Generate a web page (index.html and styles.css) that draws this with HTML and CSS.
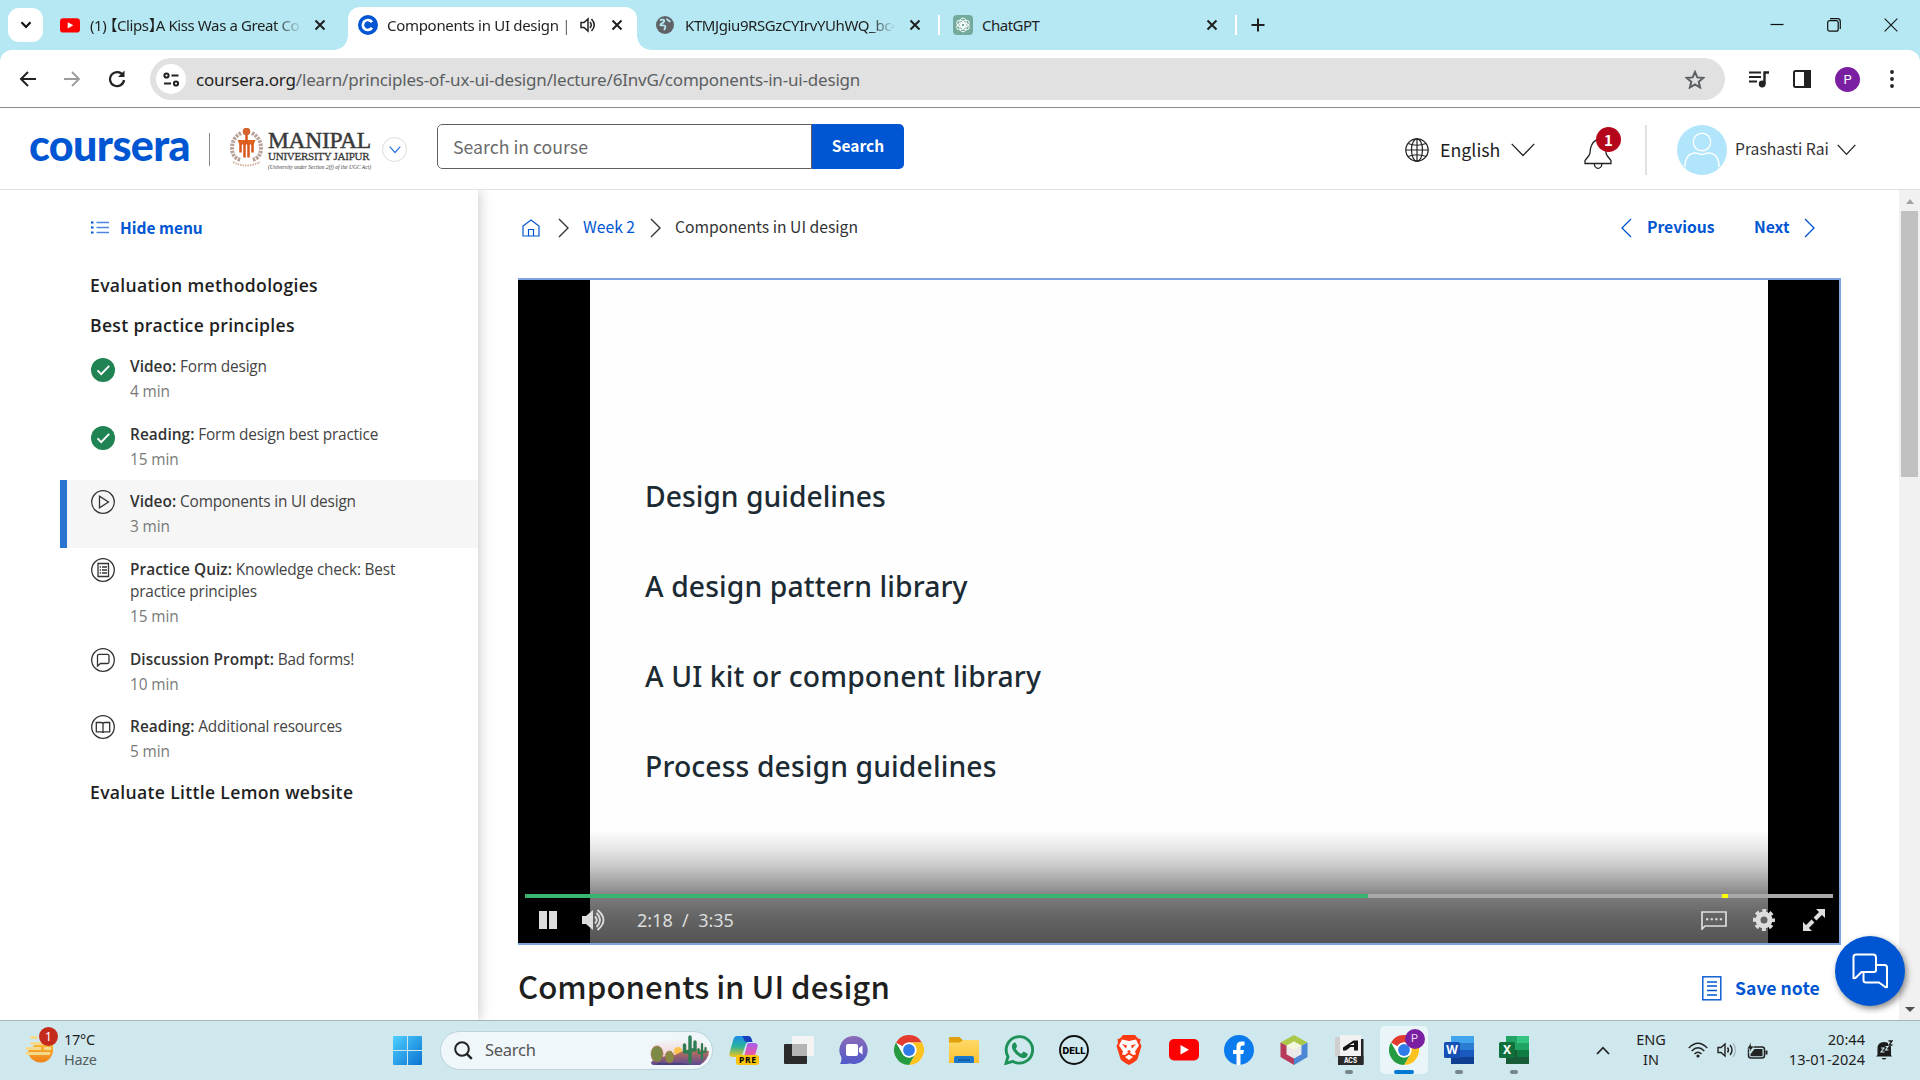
FILE: index.html
```html
<!DOCTYPE html>
<html lang="en">
<head>
<meta charset="utf-8">
<title>Components in UI design | Coursera</title>
<link rel="stylesheet" href="styles.css">
</head>
<body>
<svg class="defs" width="0" height="0">
  <defs>
    <linearGradient id="gWin" x1="0" y1="0" x2="1" y2="1"><stop offset="0" stop-color="#4fd0ff"/><stop offset="1" stop-color="#0a72d2"/></linearGradient>
    <linearGradient id="gSky" x1="0" y1="0" x2="0" y2="1"><stop offset="0" stop-color="#f0f7fa"/><stop offset="1" stop-color="#f7b3b3"/></linearGradient>
    <linearGradient id="gSand" x1="0" y1="0" x2="0" y2="1"><stop offset="0" stop-color="#c9754f"/><stop offset="1" stop-color="#5b4a94"/></linearGradient>
    <linearGradient id="gCopA" x1="0" y1="0" x2="0" y2="1"><stop offset="0" stop-color="#1b8fe8"/><stop offset=".5" stop-color="#29b39a"/><stop offset="1" stop-color="#f3c51c"/></linearGradient>
    <linearGradient id="gCopB" x1="0" y1="0" x2="0" y2="1"><stop offset="0" stop-color="#a45cf2"/><stop offset=".6" stop-color="#e85aa5"/><stop offset="1" stop-color="#f98a4c"/></linearGradient>
    <linearGradient id="gChat" x1="0" y1="0" x2="0" y2="1"><stop offset="0" stop-color="#8b6bb8"/><stop offset="1" stop-color="#5059c9"/></linearGradient>
    <linearGradient id="gFold" x1="0" y1="0" x2="0" y2="1"><stop offset="0" stop-color="#ffd968"/><stop offset="1" stop-color="#fbc02f"/></linearGradient>
    <linearGradient id="gSun" x1="0" y1="0" x2="0" y2="1"><stop offset="0" stop-color="#f9b934"/><stop offset="1" stop-color="#f08218"/></linearGradient>
    <symbol id="chrome" viewBox="0 0 30 30">
      <circle cx="15" cy="15" r="15" fill="#fff"/>
      <path d="M2 7.500A15 15 0 0 1 28 7.500H15a7.500 7.500 0 0 0-6.500 3.750z" fill="#e33b2e"/>
      <path d="M28 7.500A15 15 0 0 1 15 30l6.500-11.250A7.500 7.500 0 0 0 15 7.500z" fill="#fcc31e"/>
      <path d="M15 30A15 15 0 0 1 2 7.500l6.500 11.250a7.500 7.500 0 0 0 13 0z" fill="#249a41"/>
      <circle cx="15" cy="15" r="7.500" fill="#fff"/><circle cx="15" cy="15" r="5.900" fill="#2f7bea"/>
    </symbol>
    <symbol id="youtube" viewBox="0 0 30 22"><rect width="30" height="21.500" rx="5" fill="#f00"/><path d="M11.500 6v9.500l8.500-4.750z" fill="#fff"/></symbol>
    <symbol id="cross" viewBox="0 0 12 12"><path d="M1.500 1.500l9 9m0-9l-9 9" stroke="#1f1f1f" stroke-width="2" fill="none"/></symbol>
    <symbol id="check" viewBox="0 0 24 24"><circle cx="12" cy="12" r="12" fill="#1f8354"/><path d="M6.500 12.300l3.700 3.900 8-8.400" stroke="#fff" stroke-width="1.900" fill="none"/></symbol>
  </defs>
</svg>

<div class="tabstrip">
  <div class="tabsearch"><svg width="12" height="8" viewBox="0 0 12 8"><path d="M1.500 1.200L6 5.900l4.500-4.700" stroke="#111" stroke-width="2.200" fill="none"/></svg></div>
  <div class="tab tab-a">
    <svg class="fav" width="20" height="15"><use href="#youtube"/></svg>
    <span class="tabtext t-a">(1) <i>【</i>Clips<i>】</i>A Kiss Was a Great Co</span>
    <svg class="x" width="12" height="12"><use href="#cross"/></svg>
  </div>
  <div class="tab tab-b">
    <svg class="fav" width="20" height="20" viewBox="0 0 20 20"><circle cx="10" cy="10" r="10" fill="#0056d2"/><path d="M14 7.200a5 5 0 1 0 0 5.600" stroke="#fff" stroke-width="2.700" fill="none"/></svg>
    <span class="tabtext t-b">Components in UI design | C</span>
    <svg class="spk" width="16" height="16" viewBox="0 0 16 16"><path d="M1 5.500h3L8 2v12l-4-3.500H1z" stroke="#222" stroke-width="1.500" fill="none"/><path d="M10 5q2.500 3 0 6M11.500 2q5.500 6 0 12" stroke="#222" stroke-width="1.500" fill="none"/></svg>
    <svg class="x" width="12" height="12"><use href="#cross"/></svg>
  </div>
  <div class="tab tab-c">
    <svg class="fav" width="18" height="18" viewBox="0 0 18 18"><circle cx="9" cy="9" r="9" fill="#5f6368"/><path d="M4 4.500c2-1.500 5-1 4 1S5 7 4.500 8.500 7 9 8.500 9.500s1 2.500-.5 4.500M11 2.500c-.5 2 2.500 1.500 3 3.500" stroke="#b5e8f2" stroke-width="1.800" fill="none"/></svg>
    <span class="tabtext t-c">KTMJgiu9RSGzCYIrvYUhWQ_bc4</span>
    <svg class="x" width="12" height="12"><use href="#cross"/></svg>
  </div>
  <i class="tabsep"></i>
  <div class="tab tab-d">
    <svg class="fav" width="20" height="20" viewBox="0 0 20 20"><rect width="20" height="20" rx="4" fill="#74aa9c"/><g fill="none" stroke="#fff" stroke-width="1"><ellipse cx="10" cy="7.500" rx="3.200" ry="4.300"/><ellipse cx="10" cy="7.500" rx="3.200" ry="4.300" transform="rotate(60 10 10)"/><ellipse cx="10" cy="7.500" rx="3.200" ry="4.300" transform="rotate(120 10 10)"/><ellipse cx="10" cy="7.500" rx="3.200" ry="4.300" transform="rotate(180 10 10)"/><ellipse cx="10" cy="7.500" rx="3.200" ry="4.300" transform="rotate(240 10 10)"/><ellipse cx="10" cy="7.500" rx="3.200" ry="4.300" transform="rotate(300 10 10)"/></g></svg>
    <span class="tabtext t-d">ChatGPT</span>
    <svg class="x" width="12" height="12"><use href="#cross"/></svg>
  </div>
  <i class="tabsep"></i>
  <svg class="plus" width="14" height="14" viewBox="0 0 14 14"><path d="M7 .5v13M.5 7h13" stroke="#1f1f1f" stroke-width="2"/></svg>
  <div class="winctl">
    <svg width="14" height="14" viewBox="0 0 14 14"><path d="M.5 6.500h13" stroke="#111" stroke-width="1.200"/></svg>
    <svg width="14" height="14" viewBox="0 0 14 14"><rect x=".7" y="2.700" width="10.500" height="10.500" rx="2" fill="none" stroke="#111" stroke-width="1.200"/><path d="M3 .7h7.500a2.800 2.800 0 0 1 2.800 2.800V11" fill="none" stroke="#111" stroke-width="1.200"/></svg>
    <svg width="14" height="14" viewBox="0 0 14 14"><path d="M.7.700l12.600 12.600M13.300.700L.7 13.300" stroke="#111" stroke-width="1.100"/></svg>
  </div>
</div>

<div class="toolbar">
  <svg class="nav" width="18" height="16" viewBox="0 0 18 16"><path d="M17 8H2M9 1L2 8l7 7" stroke="#222" stroke-width="2" fill="none"/></svg>
  <svg class="nav" width="18" height="16" viewBox="0 0 18 16"><path d="M1 8h15M9 1l7 7-7 7" stroke="#9b9b9b" stroke-width="1.800" fill="none"/></svg>
  <svg class="nav reload" width="18" height="18" viewBox="0 0 18 18"><path d="M15 5.500A7 7 0 1 0 16 10" stroke="#222" stroke-width="2.200" fill="none"/><path d="M16.500.5v6.500H10z" fill="#222"/></svg>
  <div class="omnibox">
    <span class="site"><svg width="17" height="15" viewBox="0 0 17 15"><g stroke="#222" stroke-width="2" fill="none"><circle cx="3.500" cy="3.500" r="2.100"/><path d="M8.500 3.500h7M1 11.500h7"/><circle cx="13" cy="11.500" r="2.100"/></g></svg></span>
    <span class="url"><b>coursera.org</b>/learn/principles-of-ux-ui-design/lecture/6InvG/components-in-ui-design</span>
    <svg class="star" width="20" height="19" viewBox="0 0 20 19"><path d="M10 2l2.300 5.400 5.900.5-4.500 3.900 1.400 5.700L10 14.400l-5.100 3.100 1.400-5.700L1.800 7.900l5.900-.5z" stroke="#5c5f62" stroke-width="2" fill="none"/></svg>
  </div>
  <svg class="music" width="20" height="17" viewBox="0 0 20 17"><path d="M0 1.500h12M0 6h12M0 10.500h8" stroke="#222" stroke-width="2.200"/><path d="M15.500 13V1.500H20" stroke="#222" stroke-width="2.400" fill="none"/><circle cx="13.200" cy="13" r="3.400" fill="#222"/></svg>
  <svg class="panel" width="18" height="18" viewBox="0 0 18 18"><rect x="1" y="1" width="16" height="16" rx="1.500" stroke="#222" stroke-width="2" fill="none"/><path d="M11 0h7v18h-7z" fill="#222"/></svg>
  <span class="me">P</span>
  <svg class="dots" width="4" height="18" viewBox="0 0 4 18"><g fill="#222"><circle cx="2" cy="2" r="1.900"/><circle cx="2" cy="9" r="1.900"/><circle cx="2" cy="16" r="1.900"/></g></svg>
</div>

<header class="head">
  <div class="brand">coursera</div>
  <i class="rule rule-a"></i>
  <div class="manipal">
    <svg width="33" height="40" viewBox="0 0 33 40"><path d="M11 5Q2 10 2 20t9 12M22 5q9 5 9 15t-9 12" stroke="#b9a29a" stroke-width="4" stroke-dasharray="2.500 1" fill="none"/><path d="M3 34q13 7 27 0" stroke="#d5b3a4" stroke-width="2" stroke-dasharray="1.500 1" fill="none"/><circle cx="16.500" cy="3.500" r="3.800" fill="#d4622c"/><path d="M7.500 12h18l-2 4.500h-14z" fill="#e0601f"/><path d="M10.500 15.500v9M14.500 15.500v14M18.500 15.500v14M22.500 15.500v9M16.500 7v8" stroke="#d8571c" stroke-width="2.500"/></svg>
    <div class="mtext"><span class="m1">MANIPAL</span><span class="m2">UNIVERSITY JAIPUR</span><span class="m3">(University under Section 2(f) of the UGC Act)</span></div>
  </div>
  <span class="drop"><svg width="12" height="8" viewBox="0 0 12 8"><path d="M.7.700L6 6.500 11.300.700" stroke="#2a73e0" stroke-width="1.200" fill="none"/></svg></span>
  <div class="search"><span>Search in course</span><b>Search</b></div>
  <svg class="globe" width="24" height="24" viewBox="0 0 24 24"><g fill="none" stroke="#222" stroke-width="1.200"><circle cx="12" cy="12" r="11.200"/><ellipse cx="12" cy="12" rx="5.500" ry="11.200"/><path d="M.8 12h22.400M12 .8v22.400M3 5.500q9 3.500 18 0M3 18.500q9-3.500 18 0"/></g></svg>
  <span class="lang">English</span>
  <svg class="chev1" width="24" height="14" viewBox="0 0 24 14"><path d="M.7.900L12 12.500 23.300.900" stroke="#222" stroke-width="1.300" fill="none"/></svg>
  <div class="bell"><svg width="28" height="34" viewBox="0 0 28 34"><path d="M1 27.500h26v-3l-4-5c-2-3-.5-6-2.500-10C19 6 16.500 4 14 4S9 6 7.500 9.500c-2 4-.5 7-2.500 10l-4 5zM10.300 27.500a3.800 4.800 0 0 0 7.600 0M14 4V1.500" stroke="#222" stroke-width="1.300" fill="none"/></svg><span>1</span></div>
  <i class="rule rule-b"></i>
  <span class="avatar"><svg width="50" height="50" viewBox="0 0 50 50"><g fill="none" stroke="#fff" stroke-width="1.400"><circle cx="25" cy="17" r="8.700"/><path d="M8 42c0-9 4-14 11-14 2 0 3 1.500 6 1.500s4-1.500 6-1.500c7 0 11 5 11 14"/></g></svg></span>
  <span class="name">Prashasti Rai</span>
  <svg class="chev2" width="19" height="12" viewBox="0 0 19 12"><path d="M.7.900l8.800 9.500L18.300.900" stroke="#222" stroke-width="1.300" fill="none"/></svg>
</header>

<div class="page">
  <aside class="side">
    <div class="hide"><svg width="18" height="13" viewBox="0 0 18 13"><path d="M5.500 1.500H18M5.500 6.500H18M5.500 11.500H18" stroke="#4a86df" stroke-width="1.600"/><path d="M0 1.500h2.500M0 6.500h2.500M0 11.500h2.500" stroke="#0056d2" stroke-width="2.200"/></svg><b>Hide menu</b></div>
    <h3>Evaluation methodologies</h3>
    <h3>Best practice principles</h3>
    <ul>
      <li><svg class="ic low" width="24" height="24"><use href="#check"/></svg><div><p><b>Video:</b> Form design</p><small>4 min</small></div></li>
      <li><svg class="ic low" width="24" height="24"><use href="#check"/></svg><div><p><b>Reading:</b> Form design best practice</p><small>15 min</small></div></li>
      <li class="on"><svg class="ic" width="24" height="24" viewBox="0 0 24 24"><g fill="none" stroke="#333" stroke-width="1.300"><circle cx="12" cy="12" r="11.300"/><path d="M8.500 6.300v11.400l9-5.700z"/></g></svg><div><p><b>Video:</b> Components in UI design</p><small>3 min</small></div></li>
      <li class="tall"><svg class="ic" width="24" height="24" viewBox="0 0 24 24"><g fill="none" stroke="#333" stroke-width="1.300"><circle cx="12" cy="12" r="11.300"/><path d="M7 5.500h10.500v13H7zM11 9h5M11 12h5M11 15h5M8.700 9H10M8.700 12H10M8.700 15H10"/></g></svg><div><p><b>Practice Quiz:</b> Knowledge check: Best<br>practice principles</p><small>15 min</small></div></li>
      <li><svg class="ic" width="24" height="24" viewBox="0 0 24 24"><g fill="none" stroke="#333" stroke-width="1.300"><circle cx="12" cy="12" r="11.300"/><path d="M8 6.300h8.500q1.500 0 1.500 1.500V14q0 1.500-1.500 1.500h-7L6.500 18V7.800Q6.500 6.300 8 6.300z"/></g></svg><div><p><b>Discussion Prompt:</b> Bad forms!</p><small>10 min</small></div></li>
      <li><svg class="ic" width="24" height="24" viewBox="0 0 24 24"><g fill="none" stroke="#333" stroke-width="1.300"><circle cx="12" cy="12" r="11.300"/><path d="M5.300 7.500h5q1.700 0 1.700 1.500 0-1.500 1.700-1.500h5v9.300h-5q-1.700 0-1.700 1.300 0-1.300-1.700-1.300h-5zM12 9v9"/></g></svg><div><p><b>Reading:</b> Additional resources</p><small>5 min</small></div></li>
    </ul>
    <h3 class="last">Evaluate Little Lemon website</h3>
  </aside>

  <main class="main">
    <nav class="crumbs">
      <svg class="home" width="18" height="18" viewBox="0 0 18 18"><path d="M1 17V7l8-6 8 6v10zM6.500 17v-6.500h5V17" stroke="#0056d2" stroke-width="1.200" fill="none"/></svg>
      <svg class="c1" width="11" height="20" viewBox="0 0 11 20"><path d="M1 1l9 9-9 9" stroke="#333" stroke-width="1.400" fill="none"/></svg>
      <span class="week">Week 2</span>
      <svg class="c2" width="11" height="20" viewBox="0 0 11 20"><path d="M1 1l9 9-9 9" stroke="#333" stroke-width="1.400" fill="none"/></svg>
      <span class="here">Components in UI design</span>
      <svg class="c3" width="11" height="20" viewBox="0 0 11 20"><path d="M10 1l-9 9 9 9" stroke="#0056d2" stroke-width="1.300" fill="none"/></svg>
      <b class="prev">Previous</b>
      <b class="next">Next</b>
      <svg class="c4" width="11" height="20" viewBox="0 0 11 20"><path d="M1 1l9 9-9 9" stroke="#0056d2" stroke-width="1.300" fill="none"/></svg>
    </nav>
    <section class="player">
      <div class="slide"><p class="s1">Design guidelines</p><p class="s2">A design pattern library</p><p class="s3">A UI kit or component library</p><p class="s4">Process design guidelines</p></div>
      <div class="controls">
        <div class="track"><i class="done"></i><i class="mark"></i></div>
        <div class="buttons">
          <svg class="pause" width="18" height="18" viewBox="0 0 18 18"><path d="M0 0h8v18H0zM10 0h8v18h-8z" fill="#ddd"/></svg>
          <svg class="vol" width="24" height="22" viewBox="0 0 24 22"><path d="M0 7h4l7-6v20l-7-6H0z" fill="#ddd"/><path d="M13 7.500q3.500 3.500 0 7M14.500 4q7 7 0 14M15.500 1q12 10 0 20" stroke="#ddd" stroke-width="1.800" fill="none"/></svg>
          <span class="time">2:18&nbsp; /&nbsp; 3:35</span>
          <svg class="cc" width="26" height="19" viewBox="0 0 26 19"><path d="M1 1h24v14H4l-3 3z" stroke="#ddd" stroke-width="1.700" fill="none"/><path d="M5 8.200h17" stroke="#ddd" stroke-width="2" stroke-dasharray="2.300 2.300"/></svg>
          <svg class="gear" width="22" height="22" viewBox="0 0 22 22"><circle cx="11" cy="11" r="6" fill="none" stroke="#ddd" stroke-width="5"/><circle cx="11" cy="11" r="9.500" fill="none" stroke="#ddd" stroke-width="3" stroke-dasharray="4 3.460" stroke-dashoffset="2"/></svg>
          <svg class="full" width="22" height="22" viewBox="0 0 22 22"><path d="M13 0h9v9zM0 13v9h9z" fill="#ddd"/><path d="M12 10l6-6M10 12l-6 6" stroke="#ddd" stroke-width="4"/></svg>
        </div>
      </div>
    </section>
    <div class="titlebar">
      <h1>Components in UI design</h1>
      <svg width="20" height="25" viewBox="0 0 20 25"><rect x=".8" y=".8" width="18" height="23" fill="none" stroke="#0056d2" stroke-width="1.400"/><path d="M5 6h10M5 10h10M5 14.500h10M5 19h10" stroke="#0056d2" stroke-width="1.300"/></svg>
      <b>Save note</b>
    </div>
    <button class="chat"><svg width="36" height="36" viewBox="0 0 36 36"><path d="M4 1.500h17q3 0 3 3V17q0 2-2 2H9.500L4 24.500q-1 1-2.500.5V4q0-2.500 2.500-2.500z" stroke="#fff" stroke-width="2" fill="none"/><path d="M24 12h8.500q2.500 0 2.500 2.500V34q-1.500.5-2.500-.5L27 29.500H14q-2.500 0-2.500-2.500v-8" stroke="#fff" stroke-width="2" fill="none"/></svg></button>
  </main>
  <div class="scroll"><i class="up"></i><i class="thumb"></i><i class="down"></i></div>
</div>

<footer class="task">
  <div class="weather">
    <svg width="30" height="32" viewBox="0 0 30 32"><path d="M3 17a12.500 12.500 0 0 0 25-2V9H12z" fill="url(#gSun)"/><path d="M6.500 3.500h5M6.500 9.500h14M2 14.500h13M2 19.500h22M20 14.500h5" stroke="#f5d98d" stroke-width="2.800" stroke-linecap="round"/></svg>
    <span class="wb">1</span>
    <div><p>17°C</p><p class="haze">Haze</p></div>
  </div>
  <svg class="start" width="29" height="29" viewBox="0 0 29 29"><path d="M0 1q0-1 1-1h13v14H0zM15 0h13q1 0 1 1v13H15zM0 15h14v14H1q-1 0-1-1zM15 15h14v13q0 1-1 1H15z" fill="url(#gWin)"/></svg>
  <div class="tsearch">
    <svg width="19" height="19" viewBox="0 0 19 19"><circle cx="8" cy="8" r="6.800" stroke="#222" stroke-width="2" fill="none"/><path d="M12.800 12.800l5 5" stroke="#222" stroke-width="2.400"/></svg>
    <span>Search</span>
    <svg width="60" height="32" viewBox="0 0 60 32"><path d="M2 31V12Q18 3 38 4t20 14l-4 11z" fill="url(#gSky)" opacity=".75"/><circle cx="28" cy="17" r="4" fill="#ffc24d"/><path d="M1 28q10-6 24-7l10-5 10-1 14 2q0 8-9 14H4q-3 0-3-3z" fill="url(#gSand)"/><path d="M8 29h24l9 2H6z" fill="#49417f"/><ellipse cx="7" cy="20" rx="6" ry="8" fill="#7d8a45" stroke="#b85b4b" stroke-dasharray="1 1"/><ellipse cx="19.500" cy="23" rx="4.500" ry="6" fill="#8a8946" stroke="#b85b4b" stroke-dasharray="1 1"/><g fill="none" stroke="#2f7d55" stroke-linecap="round" stroke-linejoin="round"><path d="M40 28V3M40 18h-5.500v-7M40 16h5V8" stroke-width="3.400"/><path d="M52 25V10M52 19h-3.500v-4M52 18h3.500v-4" stroke-width="2.200"/></g></svg>
  </div>
  <div class="apps">
    <span><svg width="30" height="30" viewBox="0 0 30 30"><path d="M8 1h11q2.500 0 3.500 3l1 3h-3.500q-2.500 0-3.500 3l-3 9q-1 3-4 3H4q-4.500 0-3.500-4L4.500 4q1-3 3.500-3z" fill="url(#gCopA)"/><path d="M13 1h6q2.500 0 3.500 3l1 3h-6q-2 0-2.500-3z" fill="#173fc0"/><path d="M20 8h5q4.500 0 3.500 4l-3 10q-1 4-5 4h-7q-3 0-2-3h1q2 0 3-3l2-8q.5-4 2.500-4z" fill="url(#gCopB)"/><rect x="7" y="20" width="23" height="10" rx="2.500" fill="#fbc50e"/><text x="18.500" y="28" font-size="8.500" font-weight="700" text-anchor="middle" font-family="Noto Sans" textLength="17">PRE</text></svg></span>
    <span><svg width="30" height="30" viewBox="0 0 30 30"><rect y="9" width="23" height="20" rx="1" fill="#2b2b2b"/><rect x="8" y="1" width="22" height="20" rx="1" fill="#f4f4f4"/><path d="M8 9h15v12H8z" fill="#b4b4b4"/></svg></span>
    <span><svg width="30" height="30" viewBox="0 0 30 30"><path d="M15 1a14 14 0 1 1-4 27.500Q8 29 1 29q2-3 1.300-7A14 14 0 0 1 15 1z" fill="url(#gChat)"/><rect x="7" y="9" width="12" height="12" rx="2" fill="#fff"/><path d="M20 13l3.500-2.500v9L20 17z" fill="#fff"/></svg></span>
    <span><svg width="30" height="30"><use href="#chrome"/></svg></span>
    <span><svg width="30" height="28" viewBox="0 0 30 28"><path d="M0 2q0-1 1-1h9q1 0 2 1.500L13.500 4H29q1 0 1 1v7H0z" fill="#dfa10b"/><path d="M0 6.500h11l3-2.500h15q1 0 1 1v22H0z" fill="url(#gFold)"/><path d="M5 27v-5q0-2 2-2h16q2 0 2 2v5z" fill="#1a78cc"/><path d="M9 24h12" stroke="#0b4f94" stroke-width="1.200"/></svg></span>
    <span><svg width="30" height="30" viewBox="0 0 30 30"><path d="M2 28.300l2-6.800a13.200 13.200 0 1 1 5 4.900z" fill="none" stroke="#1d9157" stroke-width="2.900"/><path d="M10 7.500q1.500-.5 2 1l1 2.500q.3 1-1.300 2.500 2 4 5.500 5.500l1.800-2q.5-.5 1.500 0l2.500 1.200q1 .5.500 2-1 3-4.500 3Q14 22.500 9.500 16q-3.500-5.500.5-8.500z" fill="#1d9157"/></svg></span>
    <span><svg width="30" height="30" viewBox="0 0 30 30"><circle cx="15" cy="15" r="14" fill="none" stroke="#111" stroke-width="1.900"/><text x="15" y="18.500" font-size="9.500" font-weight="800" text-anchor="middle" font-family="Inter" textLength="23" lengthAdjust="spacingAndGlyphs">DELL</text></svg></span>
    <span><svg width="26" height="30" viewBox="0 0 26 30"><path d="M7 0h12l3 3.500 2.500.5-.5 4 1.500 3-4 13q-1 2-8.500 6Q5.500 26 4.500 24L.5 11 2 8 1.500 4 4 3.500z" fill="#f93a13"/><path d="M6 4.500l7 1.500 7-1.500 3 6-4 6 1 3-3 .5-4-3-4 3-3-.5 1-3-4-6zM9 22l4-2.500 4 2.500-4 3z" fill="#fff"/><path d="M6 9l5 1.500-1 3zM20 9l-5 1.500 1 3zM13 8v7l-2 1.500 2 1.500 2-1.500-2-1.500" fill="#f93a13"/></svg></span>
    <span><svg width="30" height="22"><use href="#youtube"/></svg></span>
    <span><svg width="30" height="30" viewBox="0 0 30 30"><circle cx="15" cy="15" r="15" fill="#0b7bee"/><path d="M12.500 30V19H9v-4h3.500v-3.500q0-5 5-5h3v4h-2q-2 0-2 2V15H20l-.8 4h-2.700v11z" fill="#fff"/></svg></span>
    <span><svg width="28" height="30" viewBox="0 0 28 30"><path d="M14 0l13.500 7.500L21 11l-7-4-7 4L.5 7.500z" fill="#abc84b"/><path d="M.5 7.500L7 11v8l7 4v7L.5 22z" fill="#b83a5b"/><path d="M27.500 7.500L21 11v8l-7 4v7l13.500-8z" fill="#4b87d4"/><path d="M14 6.500l7.500 4.300v8.500L14 23.500l-7.500-4.200v-8.500z" fill="#e9e9ea"/><path d="M14 6.500l7.500 4.300L14 15l-7.500-4.200z" fill="#f4f7de"/></svg></span>
    <span class="run"><svg width="29" height="30" viewBox="0 0 29 30"><path d="M5 4h23.500v25H5z" fill="#222"/><path d="M0 2h20v20H0z" fill="#cfcfcf"/><path d="M5 0h21v21H5z" fill="#f2f2f2"/><path d="M8 15.500v-3L18.500 5.500H23v10h-4v-3.500h-3.500l-4.500 3.500zM14.500 10H19V8z" fill="#151515" fill-rule="evenodd"/><path d="M3 21h25.500v9H3z" fill="#2a2a2a"/><text x="15.500" y="28" font-size="7" font-weight="700" fill="#fff" text-anchor="middle" font-family="Inter" textLength="13" lengthAdjust="spacingAndGlyphs">ACS</text></svg></span>
    <span class="active"><svg width="30" height="30"><use href="#chrome"/></svg><i class="pbadge">P</i></span>
    <span class="run"><svg width="30" height="28" viewBox="0 0 30 28"><rect x="7" width="23" height="28" rx="1.500" fill="#2368c4"/><path d="M7 0h23v7H7z" fill="#41a5ee"/><path d="M7 7h23v7H7z" fill="#2b7cd3"/><path d="M7 14h23v7H7z" fill="#185abd"/><path d="M7 21h23v7H7z" fill="#103f91"/><rect y="6" width="16" height="16" rx="1.500" fill="#1650b5"/><text x="8" y="18.200" font-size="12" font-weight="700" fill="#fff" text-anchor="middle" font-family="Noto Sans">W</text></svg></span>
    <span class="run"><svg width="30" height="28" viewBox="0 0 30 28"><path d="M7 0h23v28H7z" fill="#21a366"/><path d="M18 0h12v7H18z" fill="#33c481"/><path d="M18 7h12v7H18z" fill="#21a366"/><path d="M7 14h11v14H7z" fill="#185c37"/><path d="M18 14h12v7H18z" fill="#107c41"/><path d="M18 21h12v7H18z" fill="#185c37"/><rect y="6" width="16" height="16" rx="1.500" fill="#0f703b"/><text x="8" y="18.200" font-size="12" font-weight="700" fill="#fff" text-anchor="middle" font-family="Noto Sans">X</text></svg></span>
  </div>
  <div class="tray">
    <svg class="caret" width="14" height="9" viewBox="0 0 14 9"><path d="M1 8l6-6.300L13 8" stroke="#222" stroke-width="1.800" fill="none"/></svg>
    <div class="eng">ENG<br>IN</div>
    <svg class="wifi" width="20" height="16" viewBox="0 0 20 16"><g fill="none" stroke="#222" stroke-width="1.400"><path d="M.8 6q9.200-9.500 18.400 0M3.700 9q6.300-6.500 12.600 0M6.500 12q3.500-3.500 7 0"/></g><circle cx="10" cy="14" r="1.600" fill="#222"/></svg>
    <svg class="tv" width="20" height="18" viewBox="0 0 20 18"><path d="M1 6.500h3L8 3v12l-4-3.500H1z" stroke="#222" stroke-width="1.400" fill="none"/><path d="M10.500 6.500q2 2.500 0 5M13 4q4 5 0 10" stroke="#222" stroke-width="1.400" fill="none"/><path d="M16 2q5 7 0 14" stroke="#a9bcc2" stroke-width="1.400" fill="none"/></svg>
    <svg class="bat" width="21" height="17" viewBox="0 0 21 17"><rect x="1.500" y="5" width="16" height="11" rx="2.500" fill="none" stroke="#222" stroke-width="1.500"/><path d="M3.500 12l4-5h8v7.200h-12z" fill="#222"/><path d="M18.500 8.500h2v4h-2z" fill="#222"/><path d="M4 0L0 7h3l-1 4 5-7H4z" fill="#222" stroke="#cfe8ee" stroke-width=".6"/></svg>
    <div class="clock">20:44<br>13-01-2024</div>
    <svg class="nb" width="17" height="20" viewBox="0 0 17 20"><path d="M1.500 15V8.500Q1.500 2 8 2q7 0 7 6.500V15l1 1.500H0z" fill="#1b1b1b"/><path d="M5.500 18h5q-2.500 3-5 0z" fill="#1b1b1b"/><path d="M12 0h5v6h-5z" fill="#cfe8ee"/><path d="M12.500 1H16l-3 4h3.500" fill="none" stroke="#1b1b1b" stroke-width="1.300"/><path d="M5 8h3l-3 4h3.500M9.500 6.500H12L9.500 10h3" fill="none" stroke="#cfe8ee" stroke-width="1.100"/></svg>
  </div>
</footer>
</body>
</html>
```
FILE: styles.css
```css
* { box-sizing: border-box; }
body { margin: 0; width: 1920px; height: 1080px; overflow: hidden; background: #fff; font-family: "Noto Sans CJK SC", "Noto Sans", sans-serif; color: #1f1f1f; }
p, h1, h3, ul { margin: 0; padding: 0; }
svg { display: block; flex: none; }
.defs { position: absolute; }

/* browser tabs */
.tabstrip { display: flex; align-items: center; height: 50px; background: #b5e8f2; font: 15px/20px "Noto Sans", sans-serif; }
.tabsearch { width: 35px; height: 34px; margin-left: 8px; border-radius: 11px; background: #fff; display: grid; place-items: center; flex: none; }
.tab { display: flex; align-items: center; flex: none; }
.tabtext { white-space: nowrap; flex: none; }
.tab-a { width: 305px; padding-left: 17px; }
.t-a { width: 210px; margin-left: 10px; letter-spacing: -.4px; -webkit-mask-image: linear-gradient(90deg, #000 185px, transparent 212px); mask-image: linear-gradient(90deg, #000 185px, transparent 212px); font-family: "Noto Sans", "Noto Sans CJK JP", sans-serif; }
.t-a i { font-style: normal; font-family: "Noto Sans CJK JP", sans-serif; font-feature-settings: "halt"; }
.tab-a .x { margin-left: 14px; }
.tab-b { position: relative; width: 289px; height: 43px; margin-top: 7px; padding: 0 0 7px 10px; background: #fff; border-radius: 12px 12px 0 0; }
.tab-b::before, .tab-b::after { content: ""; position: absolute; bottom: 0; width: 14px; height: 14px; }
.tab-b::before { left: -14px; background: radial-gradient(circle at 0 0, transparent 13.500px, #fff 14px); }
.tab-b::after { right: -14px; background: radial-gradient(circle at 100% 0, transparent 13.500px, #fff 14px); }
.t-b { width: 186px; margin-left: 9px; letter-spacing: -.3px; -webkit-mask-image: linear-gradient(90deg, #000 172px, transparent 196px); mask-image: linear-gradient(90deg, #000 172px, transparent 196px); }
.spk { margin-left: 7px; }
.tab-b .x { margin-left: 15px; }
.tab-c { width: 301px; padding-left: 19px; }
.t-c { width: 209px; margin-left: 11px; letter-spacing: -.4px; -webkit-mask-image: linear-gradient(90deg, #000 185px, transparent 211px); mask-image: linear-gradient(90deg, #000 185px, transparent 211px); }
.tab-c .x { margin-left: 15px; }
.tabsep { width: 2px; height: 20px; background: #fff; flex: none; }
.tab-d { width: 295px; padding-left: 13px; }
.t-d { width: 214px; margin-left: 9px; letter-spacing: -.5px; }
.tab-d .x { margin-left: 10px; }
.plus { margin-left: 14px; }
.winctl { display: flex; gap: 43px; margin: 0 22px 0 auto; }

.toolbar { display: flex; align-items: center; height: 58px; background: #fff; padding: 1px 25px 0 19px; border-bottom: 1.500px solid #8b8b8b; gap: 26px; position: relative; border-radius: 12px 12px 0 0; }
.toolbar::before { content: ""; position: absolute; inset: 0 0 auto; height: 12px; z-index: -1; background: #b5e8f2; }
.reload { margin-left: 1px; }
.omnibox { display: flex; align-items: center; width: 1575px; height: 42px; margin-left: -2px; border-radius: 21px; background: #e1e1e1; padding: 0 20px 0 6px; flex: none; }
.site { width: 30px; height: 30px; border-radius: 50%; background: #fff; display: grid; place-items: center; }
.url { font: 17px/24px "Noto Sans", sans-serif; margin: 1px 0 0 10px; color: #5c5f62; letter-spacing: -.19px; white-space: nowrap; }
.url b { font-weight: 400; color: #1f1f1f; }
.star { margin-left: auto; }
.music { margin-left: -2px; }
.panel { margin-left: -2px; }
.me { width: 25px; height: 25px; border-radius: 50%; background: #7b1fa2; color: #fff; font: 13px/25px Roboto, sans-serif; text-align: center; flex: none; margin-left: -2px; }
.dots { margin-left: 4px; }

/* site header */
.head { display: flex; align-items: center; height: 82px; padding-top: 2px; border-bottom: 1px solid #e1e1e1; }
.brand { width: 160px; margin: -9px 0 0 29px; font: 900 43px/50px Lato, sans-serif; letter-spacing: -.6px; color: #0056d2; flex: none; }
.rule { display: block; flex: none; }
.rule-a { width: 1px; height: 33px; margin-left: 20px; background: #888; }
.manipal { display: flex; width: 141px; margin-left: 20px; flex: none; }
.mtext { display: flex; flex-direction: column; margin-left: 5px; white-space: nowrap; font-family: "Liberation Serif", serif; color: #3a3a3a; }
.m1 { font-size: 23.500px; line-height: 24px; font-weight: 400; letter-spacing: -.3px; -webkit-text-stroke: .5px #3a3a3a; }
.m2 { font-size: 11px; line-height: 9px; letter-spacing: -.25px; -webkit-text-stroke: .3px #3a3a3a; }
.m3 { font-size: 5.500px; line-height: 8px; font-style: italic; margin-top: 2px; letter-spacing: 0; }
.drop { width: 25px; height: 25px; margin-left: 11px; border: 1px solid #dcdcdc; border-radius: 50%; display: grid; place-items: center; flex: none; }
.search { display: flex; width: 467px; height: 45px; margin: -6px 0 0 30px; border-radius: 5px; overflow: hidden; line-height: 43px; flex: none; }
.search span { width: 375px; border: 1px solid #5f5f5f; border-radius: 5px 0 0 5px; padding-left: 15px; color: #6b6b6b; font-size: 17.700px; line-height: 42px; }
.search b { width: 92px; background: #0056d2; color: #fff; text-align: center; font-size: 15.500px; }
.globe { margin-left: 501px; }
.lang { width: 60px; margin: -1px 0 0 11px; font-size: 17.800px; }
.chev1 { margin-left: 11px; }
.bell { position: relative; margin-left: 49px; padding-top: 7px; }
.bell span { position: absolute; left: 12px; top: -2px; width: 25px; height: 25px; border-radius: 50%; background: #b5071b; color: #fff; font: 700 15px/25px "Noto Sans CJK SC", sans-serif; text-align: center; }
.rule-b { width: 2px; height: 50px; margin-left: 33px; background: #e1e1e1; }
.avatar { width: 50px; height: 50px; margin-left: 30px; border-radius: 50%; background: #b0e5fc; flex: none; }
.name { width: 94px; margin: -2px 0 0 8px; font-size: 15.700px; color: #333; white-space: nowrap; }
.chev2 { margin-left: 8px; }

.page { display: flex; height: 830px; overflow: hidden; }
.side { position: relative; width: 478px; height: 830px; flex: none; padding-top: 25px; box-shadow: 0 0 14px rgba(0,0,0,.25); font-family: "Open Sans", sans-serif; z-index: 1; background: #fff; clip-path: inset(0 -20px 0 0); }
.hide { display: flex; align-items: center; gap: 11px; height: 24px; margin-left: 91px; color: #0056d2; font: 15.500px/24px "Noto Sans CJK SC", sans-serif; }
.hide b { margin-top: -1px; }
.side h3 { font-size: 17.600px; line-height: 24px; font-weight: 600; letter-spacing: .31px; margin: 33.500px 0 0 90px; }
.side h3 + h3 { margin-top: 16px; }
.side ul { list-style: none; margin-top: 8.500px; }
.side li { display: flex; height: 67.500px; margin-left: 60px; border-left: 7px solid transparent; padding: 10px 0 0 23.500px; color: #444; font-size: 15.400px; line-height: 22px; }
.side li.tall { height: 90px; }
.side li.on { border-left-color: #2a73d0; background: #f6f6f6; }
.side li div { margin: 1px 0 0 15.500px; }
.side li p { letter-spacing: -.19px; }
.side li b { font-weight: 600; letter-spacing: .05px; color: #333; }
.ic.low { margin-top: 3px; }
.side li small { display: block; margin-top: 3px; font-size: 15.400px; letter-spacing: -.1px; color: #7a7a7a; }
.side h3.last { margin-top: 7px; }

.main { position: relative; width: 1421px; padding-left: 40px; flex: none; }
.crumbs { display: flex; align-items: center; height: 24px; margin-top: 26px; font-size: 15.700px; line-height: 24px; color: #333; white-space: nowrap; padding-left: 4px; }
.crumbs span, .crumbs b { margin-top: -2px; }
.crumbs .c1 { margin-left: 18px; } .crumbs .week { width: 54px; margin-left: 14px; color: #0056d2; }
.crumbs .c2 { margin-left: 13px; } .crumbs .here { width: 184px; margin-left: 14px; }
.crumbs .c3 { margin-left: 762px; } .crumbs .prev, .crumbs .next { color: #0056d2; }
.crumbs .prev { width: 68px; margin-left: 15px; } .crumbs .next { width: 36px; margin-left: 39px; }
.crumbs .c4 { margin-left: 14px; }
.player { position: relative; width: 1323px; height: 667px; margin-top: 38px; border: solid #7fa3e2; border-width: 2px 2px 2px 0; background: #000; }
.slide { width: 1178px; height: 663px; margin-left: 72px; padding: 195.500px 0 0 55px; background: #fefefe; font: 500 28.300px/40px "Noto Sans", sans-serif; color: #1c2b33; }
.slide p + p { margin-top: 50.200px; letter-spacing: .12px; }
.controls { position: absolute; left: 0; right: 0; bottom: 0; height: 113px; padding: 64px 6px 0 7px; background: linear-gradient(rgba(0,0,0,0) 0, rgba(0,0,0,.05) 10px, rgba(0,0,0,.1) 20px, rgba(0,0,0,.2) 35px, rgba(0,0,0,.38) 55px, rgba(0,0,0,.46) 63px, rgba(0,0,0,.52) 68px, rgba(0,0,0,.6) 85px, rgba(0,0,0,.67) 113px); }
.track { display: flex; height: 4px; background: #a9a9a9; }
.done { width: 843px; background: #3cb371; }
.mark { width: 6px; margin-left: 354px; background: #ff0; }
.buttons { display: flex; align-items: center; height: 44px; padding-left: 14px; }
.vol { margin-left: 25px; }
.time { width: 120px; margin-left: 31px; font: 18px/24px "Noto Sans", sans-serif; color: #ddd; white-space: nowrap; }
.cc { margin-left: 944px; } .gear { margin-left: 26px; } .full { margin-left: 28px; }
.titlebar { display: flex; align-items: center; height: 50px; margin-top: 18px; color: #0056d2; }
.titlebar h1 { width: 1184px; font-size: 31.200px; line-height: 40px; font-weight: 500; color: #1f1f1f; margin-top: -5px; }
.titlebar b { margin: -1px 0 0 13px; font-size: 17.600px; line-height: 24px; }
.chat { position: absolute; left: 1357px; top: 746px; width: 70px; height: 70px; padding: 0; border: 0; border-radius: 50%; background: #0056d2; display: grid; place-items: center; box-shadow: 2px 3px 6px rgba(0,0,0,.45); z-index: 2; }
.scroll { display: flex; flex-direction: column; align-items: center; width: 21px; background: #f1f1f1; flex: none; }
.up { margin-top: 9px; border: 4px solid transparent; border-top: 0; border-bottom: 5px solid #a3a3a3; }
.thumb { width: 17px; height: 266px; margin-top: 7px; background: #c1c1c1; }
.down { margin: auto 0 8px; border: 5px solid transparent; border-bottom: 0; border-top: 5px solid #505050; }

/* taskbar */
.task { display: flex; align-items: center; height: 60px; padding-bottom: 1px; background: #cfe8ee; border-top: 1px solid #a5b5ba; font: 15px/20px "Noto Sans", sans-serif; position: relative; z-index: 3; }
.weather { position: relative; display: flex; width: 393px; padding-left: 25px; gap: 9px; align-items: center; flex: none; }
.wb { position: absolute; left: 39px; top: -4px; width: 19px; height: 19px; border-radius: 50%; background: #c42b1c; color: #fff; font-size: 12px; line-height: 19px; text-align: center; }
.weather p { font-size: 14.500px; letter-spacing: -.3px; }
.weather div { margin-top: -2px; }
.haze { color: #555e61; }
.tsearch { display: flex; align-items: center; width: 273px; height: 39px; margin-left: 18px; border-radius: 20px; background: #eff7fa; border: 1px solid #bcd3da; padding-left: 13px; font-size: 16.500px; color: #555; flex: none; }
.tsearch span { width: 165px; margin-left: 12px; letter-spacing: -.25px; }
.apps { display: flex; margin-left: 3.500px; }
.apps > span { position: relative; width: 55px; height: 48px; display: grid; place-items: center; }
.apps .run::after { content: ""; position: absolute; left: 23.500px; bottom: 0; width: 8px; height: 4px; border-radius: 2px; background: #77868a; }
.apps .active::before { content: ""; position: absolute; left: 3.500px; top: 0; width: 48px; height: 48px; border-radius: 5px; background: #e9f5f8; }
.apps .active svg { position: relative; }
.apps .active::after { content: ""; position: absolute; left: 17.500px; bottom: 0; width: 20px; height: 4px; border-radius: 2px; background: #0078d4; }
.pbadge { position: absolute; left: 28px; top: 3px; width: 20px; height: 20px; border-radius: 50%; background: #7b1fa2; color: #e8d5f0; font: 11px/20px Roboto, sans-serif; text-align: center; }
.tray { display: flex; align-items: center; margin-left: 54.500px; }
.eng { width: 46px; margin: -2px 0 0 18px; text-align: center; font-size: 14.500px; }
.wifi { margin-left: 14px; } .tv { margin-left: 9px; } .bat { margin-left: 10px; }
.clock { width: 90px; margin: -2px 0 0 7px; text-align: right; font-size: 14.600px; white-space: nowrap; }
.nb { margin-left: 11px; }
```
